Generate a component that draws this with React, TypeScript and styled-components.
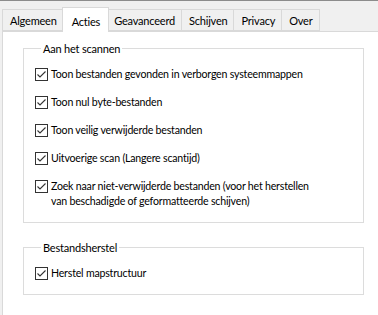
import React from "react";
import styled, { createGlobalStyle } from "styled-components";

const Global = createGlobalStyle`
  html, body { margin: 0; padding: 0; background: #f0f0f0; }
  body { font-family: Lato, "Noto Sans", sans-serif; font-size: 11px; letter-spacing: -0.2px; color: #000; }
`;

const Window = styled.div`
  width: 378px;
  height: 315px;
  overflow: hidden;
  border-top: 1px solid #8c8c8c;
  box-sizing: border-box;
  background: #f0f0f0;
`;

const TabStrip = styled.div`
  display: flex;
  align-items: flex-end;
  padding: 6px 0 0 2px;
  height: 30px;
  box-sizing: border-box;
  position: relative;
  z-index: 1;
`;

const Tab = styled.div<{ $active?: boolean; $first?: boolean }>`
  box-sizing: border-box;
  height: ${(p) => (p.$active ? "25px" : "22px")};
  padding: ${(p) => (p.$active ? "2px 8px 0 9px" : "1px 6px 0 7px")};
  margin: ${(p) => (p.$active ? "0 -2px -1px -2px" : "0")};
  display: flex;
  align-items: center;
  border: 1px solid #d9d9d9;
  border-bottom: ${(p) => (p.$active ? "none" : "1px solid #d9d9d9")};
  border-left: ${(p) => (p.$first || p.$active ? "1px solid #d9d9d9" : "none")};
  background: ${(p) => (p.$active ? "#fff" : "#f0f0f0")};
  position: relative;
  z-index: ${(p) => (p.$active ? 2 : 0)};
  white-space: nowrap;
  line-height: 15px;
`;

const Panel = styled.div`
  margin-left: 2px;
  background: #fff;
  border-left: 1px solid #d9d9d9;
  border-top: 1px solid #d9d9d9;
  padding: 9px 0 0 20px;
  height: 300px;
  box-sizing: border-box;
`;

const Group = styled.fieldset`
  width: 341px;
  box-sizing: border-box;
  margin: 0 0 17px 0;
  border: 1px solid #dcdcdc;
  padding: 11px 10px 13px 11px;
  min-width: 0;
  display: flex;
  flex-direction: column;
  gap: 13px;
`;

const Legend = styled.legend`
  padding: 0 2px;
  margin-left: 6px;
  line-height: 15px;
`;

const Row = styled.label`
  display: flex;
  align-items: flex-start;
  gap: 3px;
  line-height: 15px;
  font-size: 10.6px;
  white-space: nowrap;
`;

const Box = styled.span`
  flex: none;
  width: 13px;
  height: 13px;
  box-sizing: border-box;
  border: 1px solid #333;
  background: #fff;
  margin-top: 1px;
  display: flex;
  align-items: center;
  justify-content: center;
`;

const Check = () => (
  <svg width="11" height="11" viewBox="0 0 11 11">
    <path d="M1.5 5.5 L4 8 L9.5 2.5" fill="none" stroke="#333" strokeWidth="1.1" />
  </svg>
);

const CheckRow = ({ children }: { children: React.ReactNode }) => (
  <Row>
    <Box>
      <Check />
    </Box>
    <span>{children}</span>
  </Row>
);

const tabs = ["Algemeen", "Acties", "Geavanceerd", "Schijven", "Privacy", "Over"];

export default function App() {
  return (
    <>
      <Global />
      <Window>
        <TabStrip>
          {tabs.map((t, i) => (
            <Tab key={t} $active={t === "Acties"} $first={i === 0}>
              {t}
            </Tab>
          ))}
        </TabStrip>
        <Panel>
          <Group>
            <Legend>Aan het scannen</Legend>
            <CheckRow>Toon bestanden gevonden in verborgen systeemmappen</CheckRow>
            <CheckRow>Toon nul byte-bestanden</CheckRow>
            <CheckRow>Toon veilig verwijderde bestanden</CheckRow>
            <CheckRow>Uitvoerige scan (Langere scantijd)</CheckRow>
            <CheckRow>
              Zoek naar niet-verwijderde bestanden (voor het herstellen
              <br />
              van beschadigde of geformatteerde schijven)
            </CheckRow>
          </Group>
          <Group>
            <Legend>Bestandsherstel</Legend>
            <CheckRow>Herstel mapstructuur</CheckRow>
          </Group>
        </Panel>
      </Window>
    </>
  );
}
